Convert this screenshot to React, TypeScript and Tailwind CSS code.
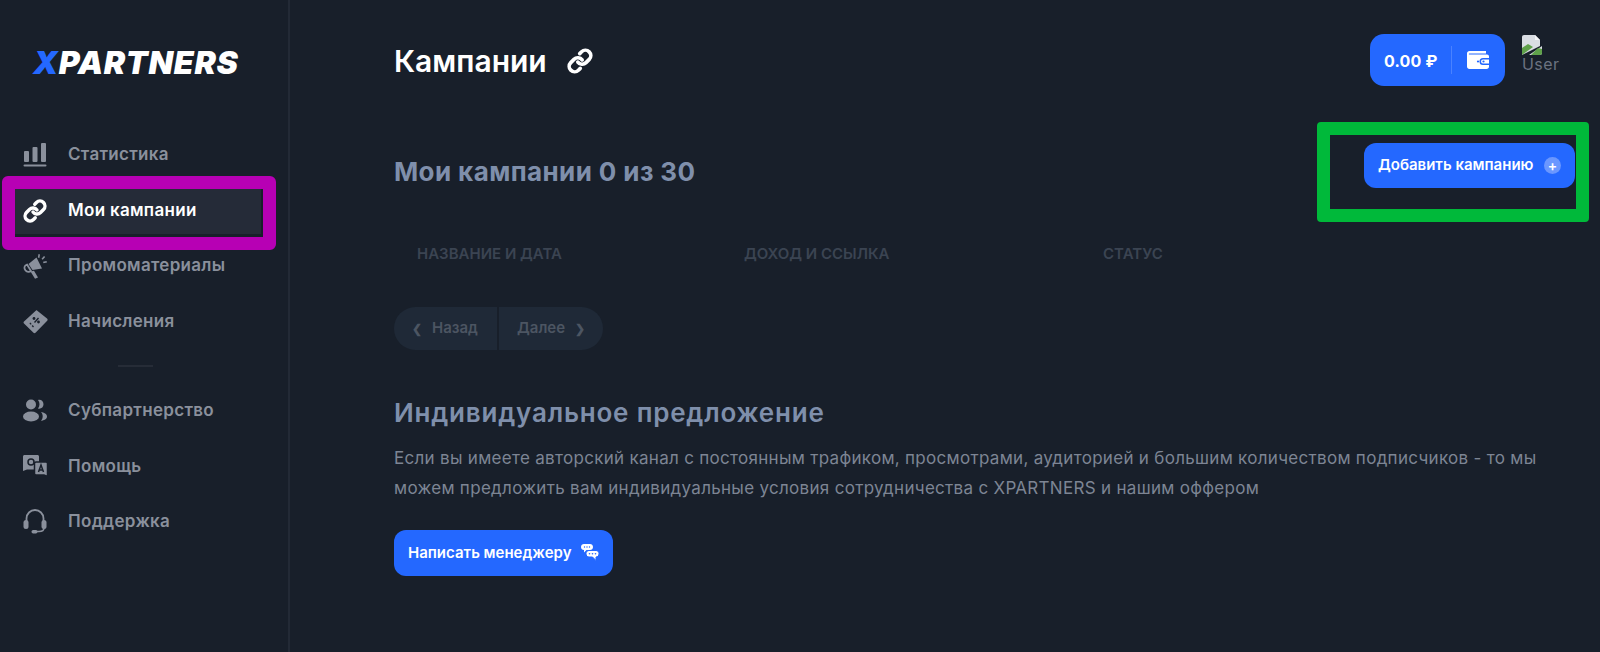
import { Link } from 'lucide-react';

const font = 'font-["Inter","Noto_Sans",sans-serif]';

function BarsIcon() {
  return (
    <svg width="24" height="25" viewBox="0 0 24 25" fill="currentColor">
      <rect x="1" y="9" width="5" height="11" rx="1" />
      <rect x="9.5" y="5" width="5" height="15" rx="1" />
      <rect x="18" y="1" width="5" height="19" rx="1" />
      <rect x="0.5" y="22.5" width="23" height="2" rx="1" />
    </svg>
  );
}

function MegaphoneIcon() {
  return (
    <svg width="24" height="25" viewBox="0 0 24 25" fill="currentColor">
      <path d="M13.500 3.500l5.500 11-9.500 1.500-4-6z" />
      <path d="M4 10.500l4 6.500c-1.500 1.200-4 1-5.500-.6C.8 14.500 1 11.500 4 10.500z" fill="none" stroke="currentColor" strokeWidth="1.800" />
      <path d="M7.500 17.500l3.500-.8 4 6.800-3 1.300z" />
      <path d="M15.500 0l1.500.4-.6 3.500-1.500-.4zM23.500 7l.5 1.500-3.500.8-.5-1.500zM21 2l1.200 1-2.500 2.800-1.200-1z" />
    </svg>
  );
}

function TicketIcon() {
  return (
    <svg width="25" height="25" viewBox="0 0 25 25">
      <path fill="currentColor" d="M14 1.500L24 9.500c.8.600.8 1.500.2 2.200L12.500 23.800c-.6.600-1.400.6-2 0L1 14.500c-.6-.6-.6-1.500 0-2L13 1.500c.3-.3.700-.3 1 0z" />
      <path stroke="#181f2a" strokeWidth="1.300" fill="none" d="M10.500 18l-4-4.500" strokeDasharray="2 1.500" />
      <path stroke="#181f2a" strokeWidth="1.300" fill="none" d="M11.500 13.500l4-4.500" />
      <circle cx="11" cy="9.500" r="1.400" fill="#181f2a" />
      <circle cx="15.500" cy="13" r="1.400" fill="#181f2a" />
    </svg>
  );
}

function UsersIcon() {
  return (
    <svg width="24" height="23" viewBox="0 0 24 23" fill="currentColor">
      <circle cx="8" cy="5.500" r="5" />
      <ellipse cx="8" cy="17.500" rx="8" ry="5" />
      <path d="M15 1c3-.8 5.500 1.200 5.500 4.300 0 3-2.500 5-5.500 4.200 2-2.200 2-6.300 0-8.500z" />
      <path d="M18 13c3 .3 6 2 6 4.400 0 2.500-3 4-6 4.300 2.300-2.300 2.300-6.400 0-8.700z" />
    </svg>
  );
}

function HelpIcon() {
  return (
    <svg width="25" height="22" viewBox="0 0 25 22">
      <path fill="currentColor" d="M1.500 0h13c.8 0 1.500.7 1.500 1.500V13c0 .8-.7 1.500-1.500 1.500H4L0 16V1.500C0 .7.700 0 1.500 0z" />
      <path fill="currentColor" d="M13 7h10c.8 0 1.500.7 1.500 1.500V21.500L21 20H13c-.8 0-1.500-.7-1.500-1.500V8.500C11.500 7.700 12.200 7 13 7z" stroke="#181f2a" strokeWidth="1.500" />
      <circle cx="8" cy="7" r="3" fill="none" stroke="#181f2a" strokeWidth="1.500" />
      <path d="M15.500 17l2.500-7 2.500 7M16.500 15h3" fill="none" stroke="#181f2a" strokeWidth="1.500" />
    </svg>
  );
}

function HeadsetIcon() {
  return (
    <svg width="24" height="25" viewBox="0 0 24 25" fill="none">
      <path d="M3.500 12V9.500a8.500 8.500 0 0117 0V12" stroke="currentColor" strokeWidth="1.800" />
      <rect x="0.500" y="11" width="5" height="9" rx="2.500" fill="currentColor" />
      <rect x="18.500" y="11" width="5" height="9" rx="2.500" fill="currentColor" />
      <path d="M21 19c0 2.500-2 3.500-5 3.500h-3" stroke="currentColor" strokeWidth="1.500" />
      <rect x="8.500" y="21" width="6" height="3.500" rx="1.700" fill="currentColor" />
    </svg>
  );
}

function WalletIcon() {
  return (
    <svg width="22" height="18" viewBox="0 0 22 18" fill="none">
      <path fill="#fff" d="M2.500 0H19v2.500H2.500c-.8 0-1 .7-.3 1H20c1.100 0 2 .9 2 2V7h-6a3.500 3.500 0 000 7h6v1.500c0 1.400-1 2.500-2.500 2.500h-17C1 18 0 16.900 0 15.500v-13C0 1 1 0 2.500 0z" />
      <path fill="#fff" d="M22 8.500V12.500h-6a2 2 0 010-4z" />
      <circle cx="11" cy="10.500" r="1.100" fill="#2468ff" />
      <circle cx="16.500" cy="10.500" r="1.100" fill="#2468ff" />
    </svg>
  );
}

function ChatIcon() {
  return (
    <svg width="18" height="18" viewBox="0 0 18 18" fill="#fff">
      <path d="M3 0h6c1.700 0 3 1.300 3 3s-1.300 3-3 3H5.500L3 8.500V6C1.300 6 0 4.700 0 3s1.300-3 3-3z" />
      <path d="M8 6.500h7c1.700 0 3 1.300 3 3.200s-1.300 3.300-3 3.300v3.500L11.500 13H8c-1.700 0-3-1.400-3-3.300s1.300-3.200 3-3.200z" stroke="#2468ff" strokeWidth="1" />
      <circle cx="3.500" cy="3" r=".7" fill="#2468ff" />
      <circle cx="6" cy="3" r=".7" fill="#2468ff" />
      <circle cx="8.500" cy="3" r=".7" fill="#2468ff" />
      <circle cx="8.500" cy="9.700" r=".8" fill="#2468ff" />
      <circle cx="11.500" cy="9.700" r=".8" fill="#2468ff" />
      <circle cx="14.500" cy="9.700" r=".8" fill="#2468ff" />
    </svg>
  );
}

function BrokenImage() {
  return (
    <svg width="20" height="20" viewBox="0 0 20 20">
      <path d="M2 0h11l5 5v6L0 20V2C0 .9.900 0 2 0z" fill="#d9dde3" />
      <path d="M0 13l6-4 5 3-11 8z" fill="#5fa14a" />
      <path d="M13 0l5 5h-5z" fill="#f5f6f7" />
      <path d="M20 11v7c0 1.100-.9 2-2 2H7z" fill="#d9dde3" />
      <path d="M20 14l-4-1-7 7h9c1.100 0 2-.9 2-2z" fill="#5fa14a" />
    </svg>
  );
}

function NavItem({ icon, label, active }: { icon: React.ReactNode; label: string; active?: boolean }) {
  return (
    <div className={`flex h-[55.7px] items-center pl-[23px] ${active ? 'text-white' : 'text-[#8a909c]'}`}>
      <div className="flex w-[45px] shrink-0 items-center">{icon}</div>
      <span className="text-[17px] font-semibold tracking-[0.3px]">{label}</span>
    </div>
  );
}

export default function App() {
  return (
    <div className={`relative flex h-[652px] w-[1600px] overflow-hidden bg-[#181f2a] ${font}`}>
      {/* Sidebar */}
      <aside className="w-[290px] shrink-0 border-r-2 border-[#232a36]">
        <div className="flex h-[127px] items-start pl-[33px] pt-[46px]">
          <span className="text-[32px] font-black italic leading-[34px] tracking-[0.7px] text-white">
            <span className="text-[#2468ff]">X</span>PARTNERS
          </span>
        </div>
        <NavItem icon={<BarsIcon />} label="Статистика" />
        <div className="relative">
          <div className="absolute left-[15px] right-[27px] top-[3px] h-[48px] bg-[#252b38]" />
          <div className="relative">
            <NavItem icon={<Link size={24} strokeWidth={3.4} />} label="Мои кампании" active />
          </div>
          {/* выделение на скриншоте */}
          <div className="absolute left-[2px] top-[-7px] h-[74px] w-[274px] rounded-[6px] border-[13px] border-[#b700b4]" />
        </div>
        <NavItem icon={<MegaphoneIcon />} label="Промоматериалы" />
        <NavItem icon={<TicketIcon />} label="Начисления" />
        <div className="flex h-[33px] items-center pl-[118px]">
          <div className="h-[2px] w-[35px] bg-[#262c37]" />
        </div>
        <NavItem icon={<UsersIcon />} label="Субпартнерство" />
        <NavItem icon={<HelpIcon />} label="Помощь" />
        <NavItem icon={<HeadsetIcon />} label="Поддержка" />
      </aside>

      {/* Content */}
      <main className="min-w-0 flex-1 pl-[104px] pr-[25px]">
        <header className="flex h-[122px] items-start justify-between">
          <div className="flex items-center gap-[20px] pt-[42px] text-white">
            <h1 className="text-[30px] font-semibold leading-[38px]">Кампании</h1>
            <Link size={26} strokeWidth={3.4} />
          </div>
          <div className="flex items-start pt-[34px]">
            <div className="flex h-[52px] w-[135px] items-center rounded-[14px] bg-[#2468ff] pl-[14px] text-white">
              <span className="w-[67px] pt-[1px] text-[16px] font-bold tracking-[0.2px]">0.00 ₽</span>
              <div className="h-[28px] w-[1px] bg-[#4a82ff]" />
              <div className="pl-[15px]">
                <WalletIcon />
              </div>
            </div>
            <div className="ml-[17px] w-[53px] pt-[1px] text-[16px] leading-[18px] text-[#6b7280]">
              <BrokenImage />
              <div className="tracking-[0.4px]">User</div>
            </div>
          </div>
        </header>

        <div className="flex h-[99px] items-start justify-between">
          <h2 className="pt-[31px] text-[26px] font-bold leading-[38px] tracking-[0.4px] text-[#7f8fab]">Мои кампании 0 из 30</h2>
          <div className="relative mt-[21px]">
            <button className="flex h-[45px] w-[211px] items-center justify-between rounded-[12px] bg-[#2468ff] px-[14px] text-[15px] font-semibold text-white">
              Добавить кампанию
              <span className="flex h-[17px] w-[17px] items-center justify-center rounded-full bg-[#6a97ff] text-[14px] leading-none">+</span>
            </button>
            {/* выделение на скриншоте */}
            <div className="absolute left-[-47px] top-[-21px] h-[100px] w-[272px] rounded-[4px] border-[13px] border-[#00b93a]" />
          </div>
        </div>

        <div className="grid h-[49px] grid-cols-[327px_359px_1fr] items-center pl-[23px] pt-[18px] text-[15px] font-semibold uppercase text-[#3b4452]">
          <span>Название и дата</span>
          <span>Доход и ссылка</span>
          <span>Статус</span>
        </div>

        <div className="mt-[37px] flex h-[43px] w-[209px] items-center overflow-hidden rounded-full bg-[#1f2937] text-[15px] font-semibold text-[#4c5562]">
          <div className="flex h-full w-[105px] items-center gap-[10px] border-r-2 border-[#181f2a] pl-[18px]">
            <span className="text-[12px]">❮</span>
            Назад
          </div>
          <div className="flex h-full flex-1 items-center gap-[10px] pl-[18px]">
            Далее
            <span className="text-[12px]">❯</span>
          </div>
        </div>

        <h2 className="mt-[46px] text-[26px] font-semibold leading-[34px] tracking-[0.8px] text-[#7f8fab]">Индивидуальное предложение</h2>
        <p className="mt-[14px] max-w-[1165px] text-[17px] leading-[29.5px] tracking-[0.3px] text-[#7d8594]">
          Если вы имеете авторский канал с постоянным трафиком, просмотрами, аудиторией и большим количеством подписчиков - то мы можем предложить вам индивидуальные условия сотрудничества с XPARTNERS и нашим оффером
        </p>
        <button className="mt-[27px] flex h-[46px] w-[219px] items-center justify-between rounded-[12px] bg-[#2468ff] px-[14px] text-[15px] font-semibold text-white">
          Написать менеджеру
          <ChatIcon />
        </button>
      </main>
    </div>
  );
}
